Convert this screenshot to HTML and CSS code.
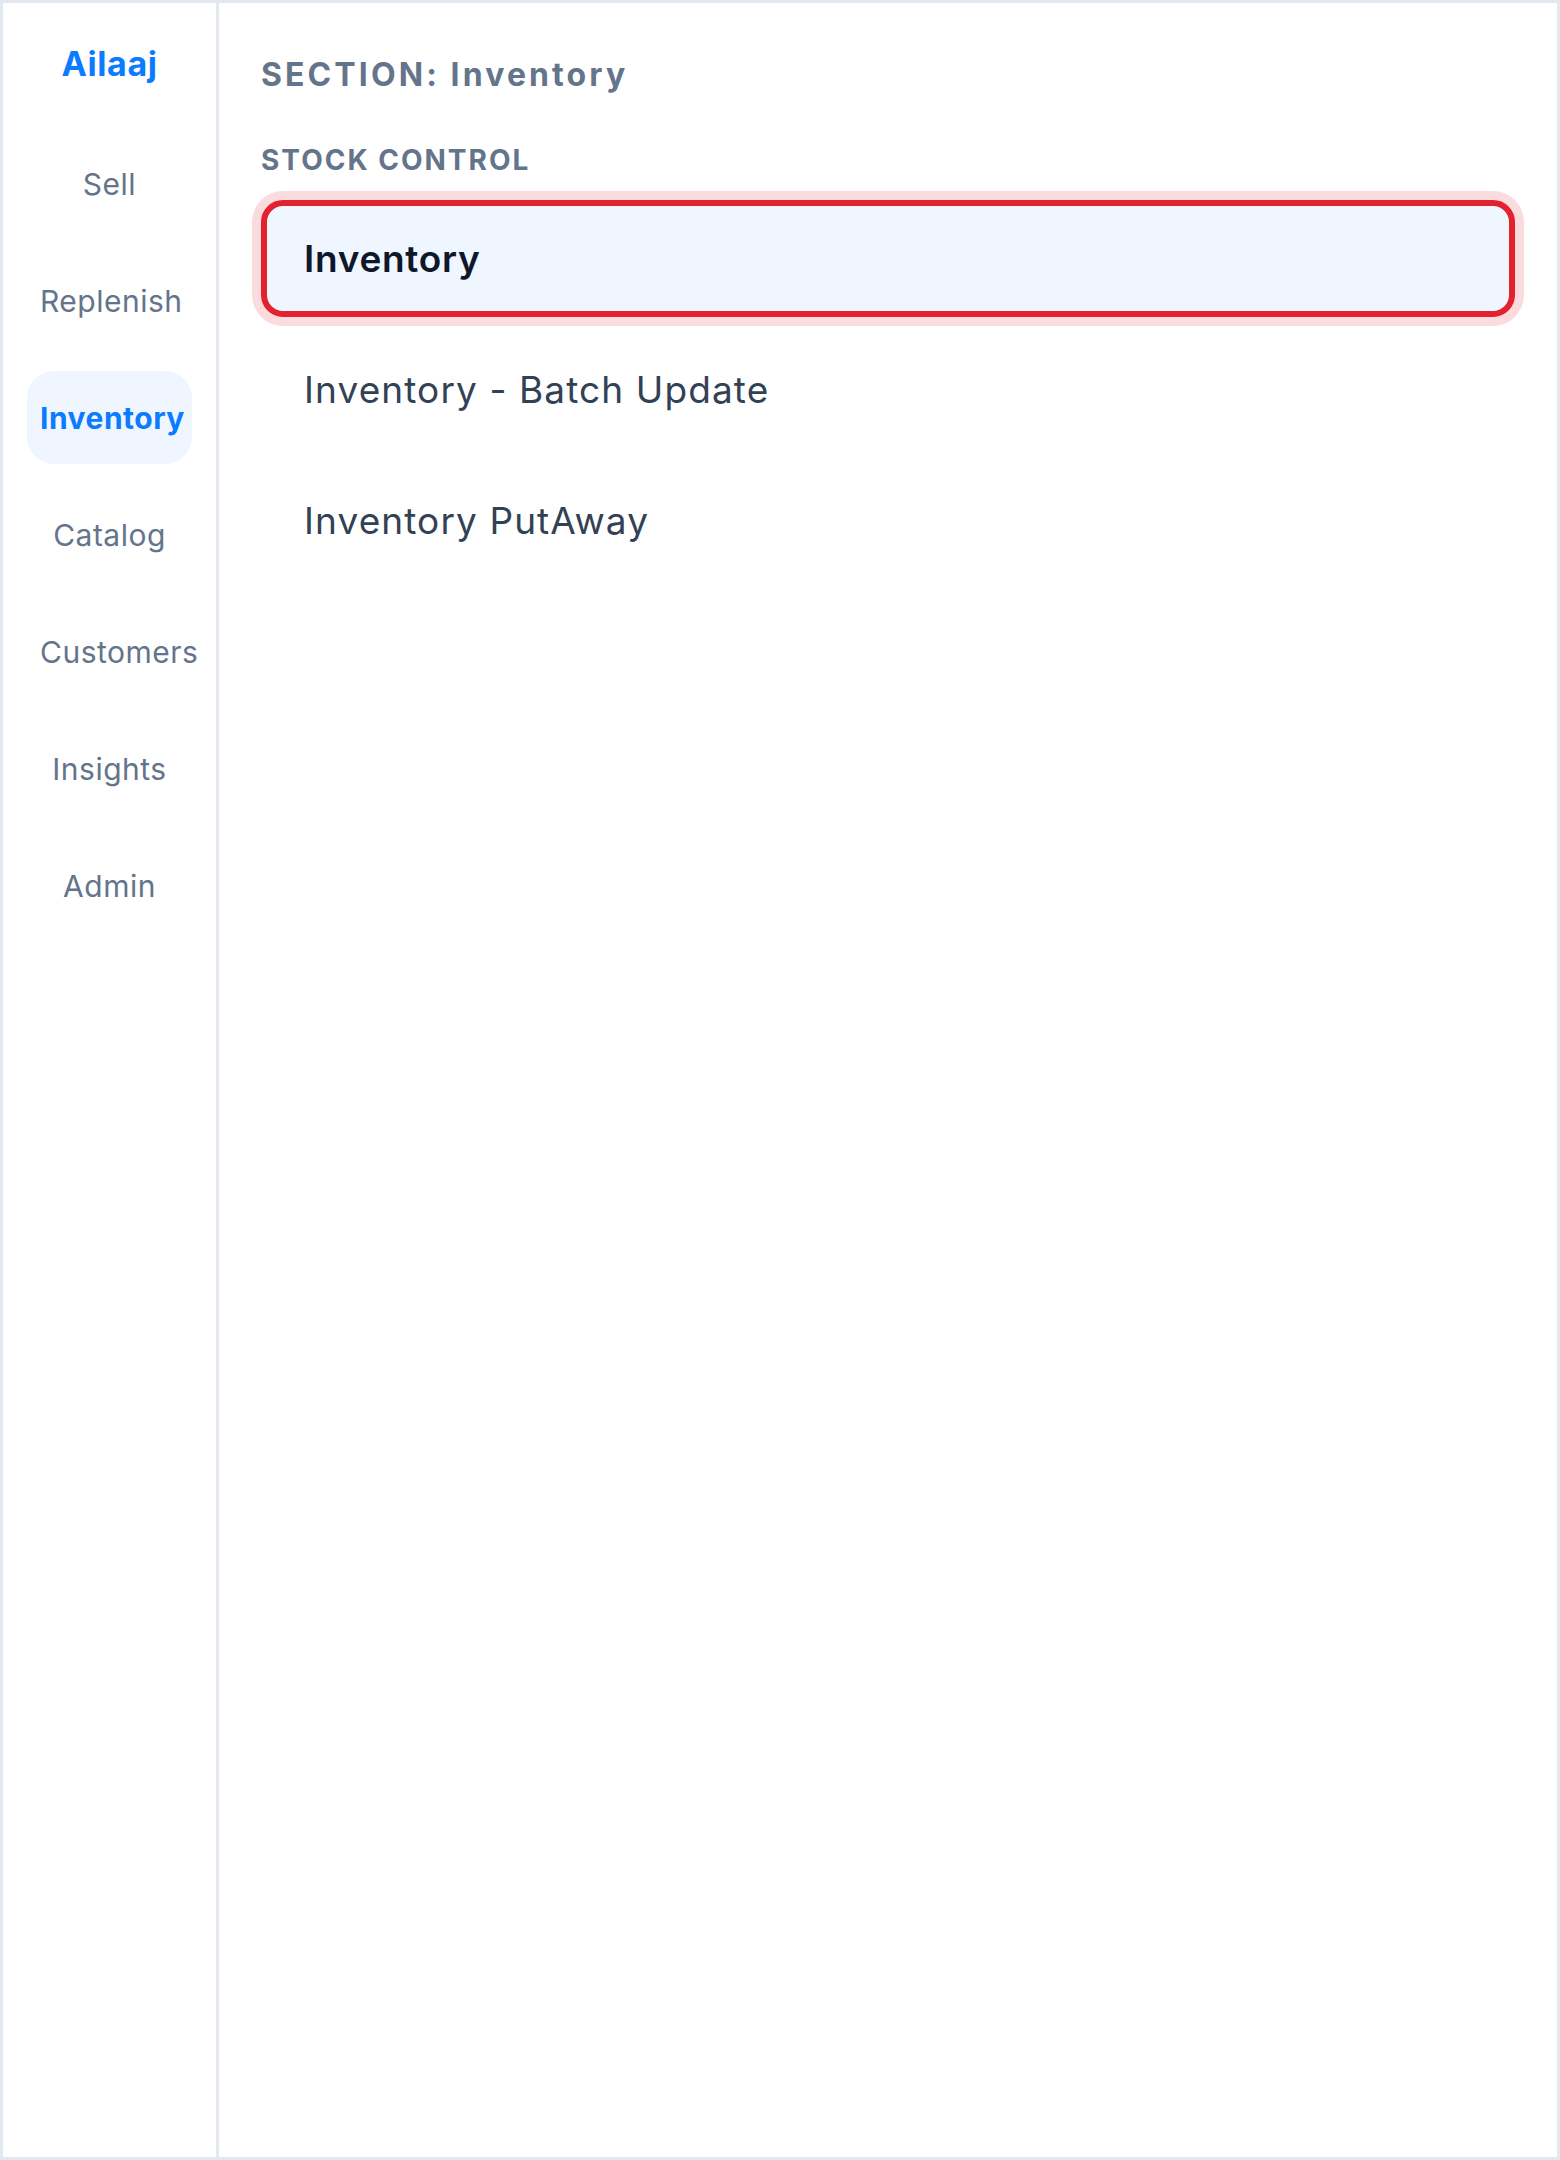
FILE: index.html
```html
<!DOCTYPE html>
<html lang="en">
<head>
<meta charset="utf-8">
<title>Ailaaj – Inventory</title>
<link rel="stylesheet" href="styles.css">
</head>
<body>
<div class="app">
  <aside class="sidebar">
    <div class="logo">Ailaaj</div>
    <nav class="nav">
      <a class="nav-item">Sell</a>
      <a class="nav-item">Replenish</a>
      <a class="nav-item active">Inventory</a>
      <a class="nav-item">Catalog</a>
      <a class="nav-item">Customers</a>
      <a class="nav-item">Insights</a>
      <a class="nav-item">Admin</a>
    </nav>
  </aside>
  <main class="main">
    <div class="section-title">SECTION: Inventory</div>
    <div class="group-title">STOCK CONTROL</div>
    <ul class="list">
      <li class="list-item selected">Inventory</li>
      <li class="list-item">Inventory - Batch Update</li>
      <li class="list-item">Inventory PutAway</li>
    </ul>
  </main>
</div>
</body>
</html>
```
FILE: styles.css
```css
* { box-sizing: border-box; }
html, body {
  margin: 0;
  padding: 0;
  background: #ffffff;
}
body {
  font-family: Inter, "Noto Sans", "Liberation Sans", sans-serif;
}
.app {
  width: 1560px;
  height: 2160px;
  border: 3px solid #e2e8f0;
  display: flex;
  background: #ffffff;
}
.sidebar {
  width: 216px;
  flex: 0 0 216px;
  border-right: 3px solid #e2e8f0;
  padding: 36px 24px 0;
  display: flex;
  flex-direction: column;
  align-items: stretch;
}
.logo {
  font-size: 34px;
  line-height: 50px;
  font-weight: 700;
  letter-spacing: 0.6px;
  color: #0b7bff;
  text-align: center;
  margin-bottom: 48px;
}
.nav {
  display: flex;
  flex-direction: column;
  gap: 24px;
}
.nav-item {
  display: block;
  font-size: 30px;
  line-height: 45px;
  padding: 25px 13px 23px;
  text-align: center;
  color: #64748b;
  white-space: nowrap;
  border-radius: 27px;
  letter-spacing: 0.5px;
}
.nav-item.active {
  background: #eff6ff;
  color: #0b7bff;
  font-weight: 700;
}
.main {
  flex: 1;
  padding: 48px 42px 0;
}
.section-title {
  font-size: 32px;
  line-height: 48px;
  font-weight: 700;
  letter-spacing: 3.1px;
  color: #64748b;
}
.group-title {
  margin-top: 40px;
  font-size: 28px;
  line-height: 42px;
  font-weight: 700;
  letter-spacing: 2px;
  color: #64748b;
}
.list {
  list-style: none;
  margin: 19px 0 0;
  padding: 0;
  display: flex;
  flex-direction: column;
  gap: 14px;
}
.list-item {
  border: 6px solid transparent;
  border-radius: 22px;
  padding: 25px 37px;
  font-size: 37px;
  line-height: 55px;
  letter-spacing: 1.1px;
  color: #334155;
}
.list-item.selected {
  border-color: #e3222f;
  background: #eff6ff;
  box-shadow: 0 0 0 9px #fadcdf;
  color: #0f172a;
  font-weight: 600;
  letter-spacing: 0.7px;
}
```
